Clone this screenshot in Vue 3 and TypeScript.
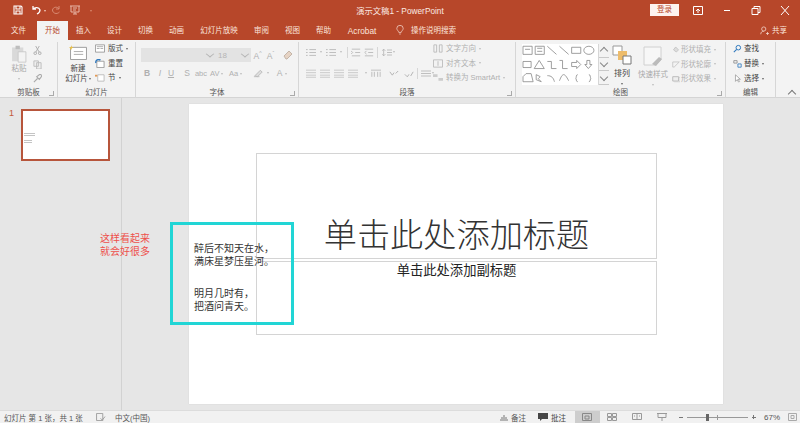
<template>
  <div class="app">
    <header class="titlebar">
      <div class="qat">
        <svg class="qi save" viewBox="0 0 10 10"><path d="M1 1h7l1 1v7H1z M3 1v3h4V1 M3 9V6h4v3" fill="none" stroke="#fff" stroke-width="1.1" /></svg>
        <svg class="qi undo" viewBox="0 0 10 10"><path d="M2 1v3h3 M2 4c2-2 6-2 7 1 0 2-1 3-3 4" fill="none" stroke="#fff" stroke-width="1.3" /></svg>
        <span class="qcaret"></span>
        <svg class="qi redo" viewBox="0 0 10 10"><path d="M8 1v3H5 M8 4C6 1 2 2 1.500 5c0 3 4 5 7 2" fill="none" stroke="#d98a72" stroke-width="1" /></svg>
        <svg class="qi present" viewBox="0 0 12 10"><path d="M1 1h10 M2 1v6h8V1 M6 7v2 M4 9h4 M4 3h4 M4 5h3" fill="none" stroke="#e8b8a8" stroke-width="1" /></svg>
        <span class="qcaret faded"></span>
      </div>
      <div class="doc-title">演示文稿1  -  PowerPoint</div>
      <div class="winbar">
        <button class="login">登录</button>
        <svg class="wi" viewBox="0 0 10 9"><path d="M.5 .5h9v8h-9z" fill="none" stroke="#fff" /><path d="M5 7V3M3 5l2-2 2 2" fill="none" stroke="#fff" /></svg>
        <svg class="wi" viewBox="0 0 10 9"><path d="M2 4.500h6" stroke="#fff" /></svg>
        <svg class="wi" viewBox="0 0 10 9"><path d="M1 2.500h6v6H1z M3 2.500V.5h6v6H7" fill="none" stroke="#fff" /></svg>
        <svg class="wi" viewBox="0 0 10 9"><path d="M1 0l8 9M9 0L1 9" stroke="#fff" /></svg>
      </div>
    </header>

    <nav class="tabs">
      <span v-for="tab in tabs" :key="tab.label" class="tab" :class="[tab.size, { active: tab.active }]">{{ tab.label }}</span>
      <svg class="bulb" viewBox="0 0 10 12"><path d="M3.500 9C3 7 1 6 1 4a4 3.800 0 0 1 8 0c0 2-2 3-2.500 5zM4 11h2" fill="none" stroke="#f6dcd3" stroke-width=".9" /></svg>
      <span class="search">操作说明搜索</span>
      <span class="share">
        <svg viewBox="0 0 12 12"><circle cx="5" cy="4" r="2.800" fill="none" stroke="#f6dcd3" /><path d="M1 11c0-3 2-4 4-4 M8 10h4M10 8v4" fill="none" stroke="#f6dcd3" /></svg>
        共享
      </span>
    </nav>

    <section class="ribbon">
      <div class="group g-clip">
        <div class="body clip-body">
          <div class="paste">
            <svg viewBox="0 0 20 22"><path d="M2 4h13v16H2z" fill="#d9d9d9" /><path d="M6 2h5v4H6z" fill="#bdbdbd" /><path d="M9 9h9v12H9z" fill="#f3f3f3" stroke="#c6c6c6" /></svg>
            <span class="muted">粘贴</span>
            <i class="caret muted-caret"></i>
          </div>
          <div class="clip-tools">
            <svg viewBox="0 0 10 10"><path d="M3 0l4 7M7 0L3 7" stroke="#aaa" fill="none" /><circle cx="2.500" cy="8" r="1.500" fill="none" stroke="#aaa" /><circle cx="7.500" cy="8" r="1.500" fill="none" stroke="#aaa" /></svg>
            <svg viewBox="0 0 10 10"><path d="M1 1h5v6H1z M4 3h5v7H4z" fill="#eee" stroke="#bbb" /></svg>
            <svg viewBox="0 0 10 10"><path d="M1 9l4-4 M4 3l3 3 3-4-2-2z" fill="none" stroke="#aaa" stroke-width="1.200" /></svg>
          </div>
        </div>
        <div class="glabel">剪贴板</div><i class="launcher"></i>
      </div>

      <div class="group g-slides">
        <div class="body slides-body">
          <div class="newslide">
            <svg viewBox="0 0 20 16"><path d="M1.500 2.500h17v13h-17z" fill="#fff" stroke="#999" /><path d="M5 7h10M5 10h10" stroke="#aaa" /><path d="M2 0l1 2 2 .5-2 1-1 2-1-2-1-1 2-.5z" fill="#e8c04a" /></svg>
            <span>新建</span>
            <span>幻灯片<i class="caret"></i></span>
          </div>
          <ul class="rows">
            <li><svg viewBox="0 0 11 9"><path d="M.5 .5h10v8H.5z" fill="#fff" stroke="#999" /><path d="M2 2.500h7M2 4.500h3M6 4.500h3" stroke="#aaa" /></svg>版式<i class="caret"></i></li>
            <li><svg viewBox="0 0 11 9"><path d="M2 2h8v7H2z" fill="#fff" stroke="#999" /><path d="M1 4a3 3 0 0 1 5-3" fill="none" stroke="#2f78bd" stroke-width="1.500" /></svg>重置</li>
            <li><svg viewBox="0 0 11 9"><path d="M3 1.500h7v7H3z" fill="#fff" stroke="#bbb" /><path d="M0 1.500h2.500v2H0z" fill="#e39a56" /></svg>节<i class="caret"></i></li>
          </ul>
        </div>
        <div class="glabel">幻灯片</div>
      </div>

      <div class="group g-font">
        <div class="body font-body">
          <div class="frow">
            <span class="fbox fname"><i class="chev"></i></span>
            <span class="fbox fsize">18<i class="chev"></i></span>
            <span class="glyph big">A<sup>^</sup></span>
            <span class="glyph big">A<sup>ˇ</sup></span>
            <svg class="eraser" viewBox="0 0 10 10"><path d="M1 6l5-5 3 3-5 5H3z" fill="#e6d3c4" stroke="#c4b5a8" /></svg>
          </div>
          <div class="frow fmt">
            <b class="glyph c-b">B</b>
            <em class="glyph c-i">I</em>
            <u class="glyph c-u">U</u>
            <span class="glyph c-s">S</span>
            <span class="glyph c-abc small">abc</span>
            <span class="glyph c-av small">AV<i class="caret muted-caret"></i></span>
            <span class="glyph c-aa small">Aa<i class="caret muted-caret"></i></span>
            <svg class="pen" viewBox="0 0 12 10"><path d="M2 8l6-6 2 2-5 5z M1 9h6" fill="#ddd" stroke="#bbb" /></svg>
            <i class="caret muted-caret"></i>
            <span class="glyph a">A<i class="caret muted-caret"></i></span>
          </div>
        </div>
        <div class="glabel">字体</div><i class="launcher"></i>
      </div>

      <div class="group g-para">
        <div class="body para-body">
          <div class="pcols">
            <div class="prow">
              <svg class="lines m-c" viewBox="0 0 12 10"><path d="M0 1.500h2M4 1.500h8M0 5h2M4 5h8M0 8.500h2M4 8.500h8" stroke="#b5b5b5" /></svg>
              <i class="caret muted-caret pc"></i>
              <svg class="lines m-c" viewBox="0 0 12 10"><path d="M0 1.500h2M4 1.500h8M0 5h2M4 5h8M0 8.500h2M4 8.500h8" stroke="#b5b5b5" /></svg>
              <i class="caret muted-caret pc"></i>
              <span class="sep s-a"></span>
              <svg class="lines m-i" viewBox="0 0 12 10"><path d="M1 1h10M5 5h6M1 9h10M0 3l2 2-2 2" fill="none" stroke="#b5b5b5" /></svg>
              <svg class="lines" viewBox="0 0 12 10"><path d="M1 1h10M5 5h6M1 9h10M3 3L1 5l2 2" fill="none" stroke="#b5b5b5" /></svg>
              <span class="sep s-b"></span>
              <svg class="lines" viewBox="0 0 12 10"><path d="M2 1v8M0 3l2-2 2 2M0 7l2 2 2-2M6 2h6M6 5h6M6 8h6" fill="none" stroke="#b5b5b5" /></svg>
              <i class="caret muted-caret pc"></i>
            </div>
            <div class="prow">
              <svg v-for="n in 4" :key="'a' + n" class="lines m-a" viewBox="0 0 12 10"><path d="M0 1h12M0 4h12M0 7h12M0 9.500h12" stroke="#c0c0c0" /></svg>
              <i class="caret muted-caret"></i>
              <svg class="lines m-col" viewBox="0 0 12 10"><path d="M0 1h12M1 3v6M4 3v6M8 3v6M11 3v6" stroke="#b5b5b5" /></svg>
              <svg class="lines m-d" viewBox="0 0 12 10"><path d="M1 3l3 4 2-3M8 5l3-3" fill="none" stroke="#b5b5b5" stroke-width="1.200" /></svg>
              <svg class="lines m-e" viewBox="0 0 12 10"><path d="M1 6l3 3 2-3M8 8l3-5" fill="none" stroke="#b5b5b5" stroke-width="1.200" /></svg>
              <span class="sep s-c"></span>
              <svg class="lines" viewBox="0 0 12 10"><path d="M0 2h12M0 5h12M0 8h12" stroke="#b5b5b5" /></svg>
              <i class="caret muted-caret pc"></i>
            </div>
          </div>
          <ul class="rows disabled">
            <li><svg viewBox="0 0 11 9"><path d="M1 .5h3v8H1zM7 .5h3v8H7z" fill="none" stroke="#bbb" /></svg>文字方向<i class="caret muted-caret"></i></li>
            <li><svg viewBox="0 0 11 9"><path d="M.5 .5h10v8H.5z M5.500 2v5" fill="none" stroke="#bbb" /></svg>对齐文本<i class="caret muted-caret"></i></li>
            <li><svg viewBox="0 0 11 9"><path d="M0 1h5v3H0z M6 5h5v3H6z" fill="#ccc" /></svg>转换为 SmartArt<i class="caret muted-caret"></i></li>
          </ul>
        </div>
        <div class="glabel">段落</div><i class="launcher"></i>
      </div>

      <div class="group g-draw">
        <div class="body draw-body">
          <div class="gallery">
            <svg viewBox="0 0 75 40">
              <g fill="none" stroke="#8a8a8a" stroke-width=".8">
                <path d="M1 2h9v8H1z M3 5h5" />
                <path d="M13 2h9v8h-9z M15 4h5M15 7h5" />
                <path d="M25 2l9 8M37 2l9 8" />
                <path d="M49 3h9v6h-9z" />
                <ellipse cx="66" cy="6" rx="5" ry="4" />
                <path d="M1 17h8v6H1z" />
                <path d="M17 16l-5 8h10z" />
                <path d="M25 17h4v7h5M37 16h3v8h5" />
                <path d="M49 18h5v-2l4 4-4 4v-2h-5z" />
                <path d="M64 16h3v4h2l-3.500 4-3.500-4h2z" />
                <path d="M1 37v-5l3-3h5l2 8z" />
                <path d="M14 30l4 2-2 2 3 3-5-2z" />
                <path d="M25 31c4 0 6 2 7 6M37 36c3-8 5-8 9 0" />
                <path d="M55 30c-2 0-1 3-2 3.500 1 .5 0 3.500 2 3.500M66 30c2 0 1 3 2 3.500-1 .5 0 3.500-2 3.500" />
              </g>
            </svg>
          </div>
          <div class="scroller">
            <span><i class="up"></i></span>
            <span><i class="down"></i></span>
            <span><i class="down"></i></span>
          </div>
          <div class="bigbtn arrange">
            <svg viewBox="0 0 20 20"><path d="M1 1h9v9H1z" fill="#fff" stroke="#999" /><path d="M6 6h9v9H6z" fill="#edbc6b" /><path d="M11 11h8v8h-8z" fill="#fff" stroke="#777" /></svg>
            <span>排列</span>
            <i class="caret"></i>
          </div>
          <div class="bigbtn quick muted">
            <svg viewBox="0 0 22 22"><path d="M2 2h17v13l-5 5H2z" fill="#f7f7f7" stroke="#d0d0d0" /><path d="M10 19l7-7 3 2-6 7z" fill="#bbb" /></svg>
            <span>快速样式</span>
            <i class="caret muted-caret"></i>
          </div>
          <ul class="rows disabled shape-rows">
            <li><svg viewBox="0 0 11 9"><path d="M2 5l3-4 4 4-3 3z" fill="#ddd" stroke="#bbb" /></svg>形状填充<i class="caret muted-caret"></i></li>
            <li><svg viewBox="0 0 11 9"><path d="M1 1h9L3 8H1z" fill="none" stroke="#bbb" /></svg>形状轮廓<i class="caret muted-caret"></i></li>
            <li><svg viewBox="0 0 11 9"><path d="M1 2h8v6H1z" fill="#eee" stroke="#aaa" /><path d="M9 3h2v6H3" fill="none" stroke="#ccc" /></svg>形状效果<i class="caret muted-caret"></i></li>
          </ul>
        </div>
        <div class="glabel">绘图</div><i class="launcher"></i>
      </div>

      <div class="group g-edit">
        <div class="body edit-body">
          <ul class="rows">
            <li><svg viewBox="0 0 11 9"><circle cx="6.500" cy="3.500" r="2.800" fill="none" stroke="#2f78bd" stroke-width="1.200" /><path d="M4.500 5.500L1 9" stroke="#2f78bd" stroke-width="1.300" /></svg>查找</li>
            <li><svg viewBox="0 0 11 9"><path d="M1 1h4v3H1z" fill="none" stroke="#8a8a8a" /><path d="M6 5h4v4H6z" fill="none" stroke="#2f78bd" /></svg>替换<i class="caret"></i></li>
            <li><svg viewBox="0 0 11 9"><path d="M3 0v8l2-2 2 3 1-1-2-2.500h3z" fill="#fff" stroke="#888" stroke-width=".8" /></svg>选择<i class="caret"></i></li>
          </ul>
        </div>
        <div class="glabel">编辑</div>
      </div>

      <div class="collapse"><i class="up"></i></div>
    </section>

    <main class="workspace">
      <aside class="thumbs">
        <span class="num">1</span>
        <div class="thumb">
          <i class="t1"></i><i class="t2"></i><i class="t3"></i><i class="t4"></i>
        </div>
      </aside>
      <div class="stage">
        <div class="slide">
          <div class="ph ph-title">单击此处添加标题</div>
          <div class="ph ph-sub">单击此处添加副标题</div>
        </div>
        <div class="note">这样看起来<br />就会好很多</div>
        <div class="callout">
          <p>醉后不知天在水，<br />满床星梦压星河。</p>
          <p>明月几时有，<br />把酒问青天。</p>
        </div>
      </div>
    </main>

    <footer class="status">
      <span class="s-count">幻灯片 第 1 张，共 1 张</span>
      <svg class="s-spell" viewBox="0 0 11 9"><path d="M.5 .5h7v8h-7z" fill="none" stroke="#999" /><path d="M5 6l2 2 3-4" fill="none" stroke="#999" /></svg>
      <span class="s-lang">中文(中国)</span>
      <span class="s-right">
        <span class="s-item"><svg viewBox="0 0 8 7"><path d="M0 6h8M1 4h6M3 2h2" stroke="#777" /></svg>备注</span>
        <span class="s-item s-cmt"><svg viewBox="0 0 10 8"><path d="M0 0h10v6H4L2 8V6H0z" fill="#444" /></svg>批注</span>
        <span class="view on"><svg viewBox="0 0 10 8"><path d="M.5 .5h9v7h-9z M3 3h4v3H3z" fill="none" stroke="#888" /></svg></span>
        <span class="view"><svg viewBox="0 0 10 8"><path d="M.5 .5h4v3h-4zM5.500 .5h4v3h-4zM.5 4.500h4v3h-4zM5.500 4.500h4v3h-4z" fill="none" stroke="#999" /></svg></span>
        <span class="view"><svg viewBox="0 0 10 8"><path d="M.5 .5h9v6h-9zM5 .5v6M2 3h1M7 3h1" fill="none" stroke="#999" /></svg></span>
        <span class="view"><svg viewBox="0 0 10 8"><path d="M0 .5h10M1 .5v4h8v-4M5 4.500V8" fill="none" stroke="#999" /></svg></span>
        <span class="zoom">
          <i class="z-minus"></i>
          <span class="z-track"><i class="z-mid"></i><i class="z-thumb"></i></span>
          <i class="z-plus"></i>
        </span>
        <span class="pct">67%</span>
        <svg class="s-fit" viewBox="0 0 9 8"><path d="M.5 .5h8v7h-8zM3 2.500h3v3H3z" fill="none" stroke="#aaa" /></svg>
      </span>
    </footer>
  </div>
</template>

<script setup lang="ts">
interface Tab {
  label: string
  size: string
  active?: boolean
}

const tabs: Tab[] = [
  { label: '文件', size: 'first' },
  { label: '开始', size: 'std', active: true },
  { label: '插入', size: 'std' },
  { label: '设计', size: 'std' },
  { label: '切换', size: 'std' },
  { label: '动画', size: 'std' },
  { label: '幻灯片放映', size: 'wide' },
  { label: '审阅', size: 'std' },
  { label: '视图', size: 'std' },
  { label: '帮助', size: 'std' },
  { label: 'Acrobat', size: 'acro' },
]
</script>

<style>
html,
body {
  margin: 0;
  background: #e6e6e6;
}
</style>

<style scoped>
.app {
  width: 800px;
  height: 423px;
  display: flex;
  flex-direction: column;
  overflow: hidden;
  font-family: "Liberation Sans", "Noto Sans CJK SC", sans-serif;
  font-size: 7.5px;
  color: #444;
}

/* title bar */
.titlebar {
  height: 20px;
  flex: none;
  background: #b7472a;
  color: #fff;
  display: grid;
  grid-template-columns: 1fr auto 1fr;
  align-items: center;
}
.qat {
  display: flex;
  align-items: center;
  padding-left: 13px;
}
.qi {
  height: 10px;
  width: 10px;
}
.undo {
  margin-left: 8px;
}
.qcaret {
  margin-left: 3px;
  border: 1.5px solid transparent;
  border-top: 2px solid #f1cfc4;
  margin-top: 2px;
}
.qcaret.faded {
  margin-left: 9px;
  border-top-color: #d98a72;
}
.redo {
  margin-left: 5px;
}
.present {
  width: 12px;
  margin-left: 8px;
}
.doc-title {
  font-size: 8.300px;
  white-space: pre;
  color: #fbe9e3;
}
.winbar {
  display: flex;
  align-items: center;
  justify-content: flex-end;
  padding-right: 10px;
}
.login {
  width: 29px;
  height: 12px;
  margin-right: 14px;
  padding: 0;
  border: 0;
  background: #fdf3ef;
  color: #b7472a;
  font: inherit;
  line-height: 12px;
}
.wi {
  width: 10px;
  height: 9px;
  margin-left: 19px;
}
.wi:first-of-type {
  margin-left: 0;
}

/* tabs */
.tabs {
  height: 20px;
  flex: none;
  background: #b7472a;
  color: #fbe4dc;
  display: flex;
  align-items: flex-end;
}
.tab {
  height: 19px;
  line-height: 20px;
  text-align: center;
}
.tab.first {
  width: 37px;
}
.tab.std {
  width: 31px;
}
.tab.wide {
  width: 54px;
}
.tab.acro {
  width: 46px;
  font-size: 8.300px;
}
.tab.active {
  background: #f3f3f3;
  color: #b7472a;
}
.bulb {
  width: 8px;
  height: 12px;
  margin: 0 0 4px 11px;
}
.search {
  height: 19px;
  line-height: 20px;
  margin-left: 7px;
}
.share {
  margin-left: auto;
  margin-right: 13px;
  height: 19px;
  line-height: 20px;
  display: flex;
  align-items: center;
  gap: 3px;
}
.share svg {
  width: 9px;
  height: 9px;
}

/* ribbon */
.ribbon {
  height: 58px;
  flex: none;
  background: #f3f3f3;
  border-bottom: 1px solid #d4d4d4;
  display: flex;
  position: relative;
  box-sizing: border-box;
}
.group {
  flex: none;
  height: 56px;
  margin-top: 2px;
  border-right: 1px solid #d6d6d6;
  box-sizing: border-box;
  display: flex;
  flex-direction: column;
  position: relative;
}
.g-clip { width: 58px; }
.g-slides { width: 78px; }
.g-font { width: 163px; }
.g-para { width: 217px; }
.g-draw { width: 210px; }
.g-edit { width: 50px; }
.body {
  flex: 1;
  display: flex;
  min-height: 0;
}
.glabel {
  flex: none;
  height: 11px;
  line-height: 11px;
  text-align: center;
  color: #555;
}
.launcher {
  position: absolute;
  right: 3px;
  bottom: 2px;
  width: 4px;
  height: 4px;
  border-right: 1px solid #aaa;
  border-bottom: 1px solid #aaa;
}
.muted {
  color: #a9a9a9;
}
.caret {
  display: inline-block;
  margin-left: 3px;
  vertical-align: middle;
  border: 1.5px solid transparent;
  border-top: 2px solid #666;
  border-bottom: 0;
}
.caret.muted-caret {
  border-top-color: #bdbdbd;
}

.rows {
  list-style: none;
  margin: 0;
  padding: 0;
  display: flex;
  flex-direction: column;
  gap: 3.5px;
}
.rows li {
  height: 11px;
  line-height: 11px;
  display: flex;
  align-items: center;
  white-space: nowrap;
}
.rows li svg {
  width: 10px;
  height: 9px;
  margin-right: 3px;
  flex: none;
}
.rows.disabled {
  color: #b0b0b0;
}

/* clipboard */
.clip-body {
  padding: 2px 0 0 9px;
}
.paste {
  width: 20px;
  display: flex;
  flex-direction: column;
  align-items: center;
  line-height: 10px;
}
.paste svg {
  width: 18px;
  height: 19px;
}
.paste span {
  margin-top: 1px;
}
.paste .caret {
  margin: 4px 0 0;
}
.clip-tools {
  margin-left: 4px;
  display: flex;
  flex-direction: column;
  gap: 5px;
  padding-top: 2px;
}
.clip-tools svg {
  width: 9px;
  height: 9px;
}

/* slides */
.slides-body {
  padding: 3px 0 0 3px;
}
.newslide {
  width: 34px;
  display: flex;
  flex-direction: column;
  align-items: center;
  line-height: 10px;
}
.newslide svg {
  width: 19px;
  height: 15px;
  margin-bottom: 4px;
}
.newslide .caret {
  margin-left: 1px;
}
.slides-body .rows {
  margin-top: -2px;
}

/* font */
.font-body {
  flex-direction: column;
  padding: 7px 0 0 5px;
  gap: 6px;
}
.frow {
  display: flex;
  align-items: center;
  height: 12px;
}
.fbox {
  height: 14px;
  background: #e3e3e3;
  box-sizing: border-box;
  display: flex;
  align-items: center;
  color: #b5b5b5;
  position: relative;
}
.fname {
  width: 75px;
}
.fsize {
  width: 35px;
  padding-left: 2px;
  font-size: 8px;
}
.chev {
  position: absolute;
  right: 3px;
  top: 3px;
  width: 5px;
  height: 5px;
  border-right: 1px solid #b5b5b5;
  border-bottom: 1px solid #b5b5b5;
  transform: scaleY(.8) rotate(45deg);
}
.glyph {
  color: #b0b0b0;
  font-size: 8.500px;
  text-align: center;
  flex: none;
}
.glyph.big {
  width: 13px;
}
.glyph sup {
  font-size: 5px;
}
.eraser {
  width: 10px;
  height: 10px;
  margin-left: 6px;
}
.c-b { width: 12px; }
.c-i { width: 14px; }
.c-u { width: 8px; }
.c-s { width: 12px; margin-left: 6px; }
.c-abc { width: 16px; }
.c-av { width: 16px; margin-left: 1px; text-align: left; }
.c-aa { width: 20px; margin-left: 3px; text-align: left; }
.small {
  font-size: 7.500px;
}
.small .caret {
  margin-left: 2px;
}
.pen {
  width: 11px;
  height: 10px;
  margin-left: 4px;
}
.glyph.a {
  margin-left: 6px;
  width: 14px;
}

/* paragraph */
.para-body {
  padding-left: 7px;
}
.pcols {
  width: 127px;
  display: flex;
  flex-direction: column;
  padding-top: 5px;
  gap: 11px;
}
.prow {
  display: flex;
  align-items: center;
  height: 10px;
}
.lines {
  width: 10px;
  height: 9px;
  flex: none;
}
.m-c {
  margin-right: 3px;
}
.pc {
  margin: 0 4px 0 1px;
}
.sep {
  width: 1px;
  height: 11px;
  background: #d6d6d6;
  flex: none;
}
.s-a { margin: 0 3px 0 1px; }
.s-b { margin: 0 4px 0 3px; }
.s-c { margin: 0 3px 0 1px; }
.m-i { margin-right: 3px; }
.m-a { margin-right: 4px; }
.m-col { margin: 0 8px 0 4px; }
.m-d { margin-right: 5px; }
.m-e { margin-right: 2px; }
.para-body .rows {
  padding-top: 1px;
  font-size: 7.5px;
  line-height: 11px;
}

/* drawing */
.draw-body {
  padding: 2px 0 0 6px;
}
.gallery {
  width: 76px;
  height: 41px;
  background: #fff;
}
.gallery svg {
  width: 76px;
  height: 41px;
  display: block;
}
.scroller {
  width: 11px;
  height: 41px;
  display: flex;
  flex-direction: column;
  border-left: 1px solid #d6d6d6;
  box-sizing: border-box;
}
.scroller span {
  flex: 1;
  display: flex;
  align-items: center;
  justify-content: center;
  border-bottom: 1px solid #c9c9c9;
}
.up,
.down {
  display: block;
  width: 5px;
  height: 5px;
  border-left: 1px solid #888;
  border-top: 1px solid #888;
  transform: translateY(1px) rotate(45deg);
}
.down {
  transform: translateY(-1px) rotate(225deg);
}
.bigbtn {
  display: flex;
  flex-direction: column;
  align-items: center;
  line-height: 11px;
}
.arrange {
  width: 22px;
  margin-left: 2px;
  color: #444;
  font-size: 8px;
}
.arrange svg {
  width: 20px;
  height: 20px;
  margin-top: 1px;
  margin-bottom: 3px;
}
.quick {
  width: 34px;
  margin-left: 3px;
}
.quick svg {
  width: 22px;
  height: 22px;
  margin-top: 1px;
  margin-bottom: 2px;
}
.bigbtn .caret {
  margin: 4px 0 0;
}
.shape-rows {
  margin-left: 2px;
}
.shape-rows li svg {
  width: 8px;
  margin-right: 1px;
}

/* editing */
.edit-body {
  padding: 1px 0 0 7px;
}
.edit-body .rows {
  gap: 4px;
}
.edit-body .rows li svg {
  width: 9px;
  margin-right: 2px;
}

.collapse {
  position: absolute;
  right: 5px;
  bottom: 1px;
}
.collapse .up {
  border-color: #777;
}

/* workspace */
.workspace {
  flex: 1;
  min-height: 0;
  display: flex;
  background: #e6e6e6;
}
.thumbs {
  width: 122px;
  flex: none;
  box-sizing: border-box;
  border-right: 1px solid #d2d2d2;
  display: flex;
  align-items: flex-start;
  padding: 11px 0 0 9px;
  gap: 9px;
}
.num {
  font-size: 9px;
  color: #c2583b;
  line-height: 9px;
  width: 3px;
}
.thumb {
  width: 89px;
  height: 52px;
  box-sizing: border-box;
  background: #fff;
  border: 2px solid #b7553b;
  position: relative;
}
.thumb i {
  position: absolute;
  left: 1px;
  height: 1px;
  background: #c4c4c4;
}
.thumb .t1 { top: 22px; width: 11px; }
.thumb .t2 { top: 24px; width: 11px; }
.thumb .t3 { top: 29px; width: 8px; }
.thumb .t4 { top: 31px; width: 8px; }

.stage {
  flex: 1;
  position: relative;
  padding: 6px 0 0 67px;
}
.slide {
  width: 534px;
  height: 300px;
  background: #fff;
  box-shadow: 0 0 1px #c8c8c8;
  position: relative;
}
.ph {
  position: absolute;
  left: 67px;
  width: 401px;
  box-sizing: border-box;
  border: 1px solid #d4d4d4;
  text-align: center;
  color: #222;
}
.ph-title {
  top: 49px;
  height: 106px;
  font-size: 33.200px;
  font-weight: 300;
  line-height: 40px;
  padding-top: 62px;
  color: #333;
}
.ph-sub {
  top: 157px;
  height: 74px;
  font-size: 13.300px;
  line-height: 18px;
}
.note {
  position: absolute;
  left: -22px;
  top: 134px;
  width: 50px;
  font-size: 10px;
  line-height: 13px;
  color: #ee4f4a;
}
.callout {
  position: absolute;
  left: 48px;
  top: 124px;
  width: 124px;
  height: 103px;
  box-sizing: border-box;
  border: 3px solid #21d5d5;
  padding: 17px 0 0 21px;
  font-size: 10px;
  line-height: 13px;
  color: #333;
  white-space: nowrap;
}
.callout p {
  margin: 0 0 19px;
}

/* status bar */
.status {
  height: 13px;
  flex: none;
  background: #f1f1f1;
  border-top: 1px solid #dcdcdc;
  box-sizing: border-box;
  display: flex;
  align-items: center;
  padding-left: 4px;
  color: #555;
}
.s-count {
  width: 92px;
}
.s-spell {
  width: 10px;
  height: 8px;
}
.s-lang {
  margin-left: 9px;
}
.s-right {
  margin-left: auto;
  display: flex;
  align-items: center;
  height: 100%;
  padding-right: 3px;
}
.s-item {
  display: flex;
  align-items: center;
  gap: 3px;
}
.s-item svg {
  width: 8px;
  height: 7px;
}
.s-cmt {
  margin-left: 12px;
  color: #444;
}
.s-cmt svg {
  width: 10px;
  height: 8px;
}
.view {
  width: 25px;
  height: 100%;
  display: flex;
  align-items: center;
  justify-content: center;
}
.view svg {
  width: 10px;
  height: 8px;
}
.view.on {
  background: #cdcdcd;
  margin-left: 9px;
}
.zoom {
  display: flex;
  align-items: center;
  margin-left: 4px;
}
.z-minus,
.z-plus {
  width: 4px;
  height: 1px;
  background: #777;
  position: relative;
}
.z-plus::after {
  content: "";
  position: absolute;
  left: 1.500px;
  top: -1.500px;
  width: 1px;
  height: 4px;
  background: #777;
}
.z-track {
  width: 61px;
  height: 1px;
  margin: 0 4px;
  background: #999;
  position: relative;
}
.z-mid {
  position: absolute;
  left: 30px;
  top: -2px;
  width: 1px;
  height: 5px;
  background: #999;
}
.z-thumb {
  position: absolute;
  left: 19px;
  top: -3px;
  width: 3px;
  height: 7px;
  background: #666;
}
.pct {
  margin-left: 8px;
  font-size: 8px;
}
.s-fit {
  width: 9px;
  height: 8px;
  margin-left: 8px;
}
</style>
